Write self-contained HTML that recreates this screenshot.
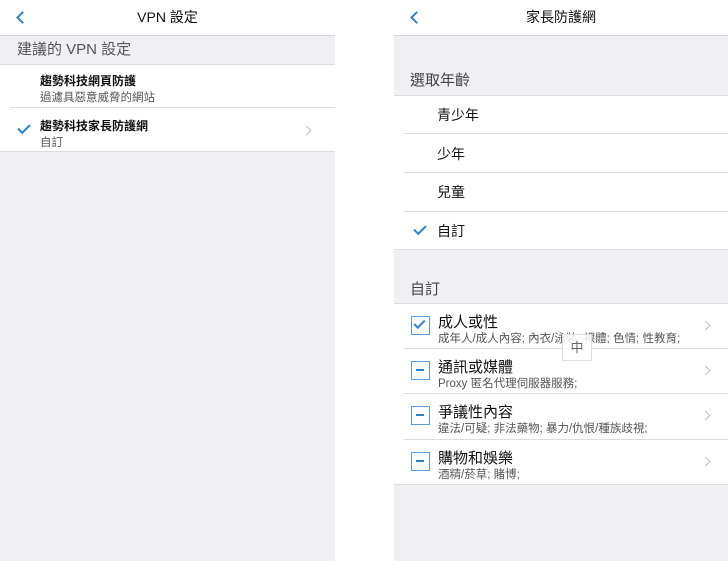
<!DOCTYPE html><html><head><meta charset="utf-8"><style>
*{margin:0;padding:0;box-sizing:border-box}
body{width:728px;height:561px;background:#fff;font-family:"Liberation Sans","Noto Sans CJK TC",sans-serif;position:relative;overflow:hidden}
.p{position:absolute;top:0;height:561px;background:#efeff4}
.hd{position:absolute;left:0;right:0;top:0;height:36px;background:#fff;border-bottom:1px solid #d8d8dc;text-align:center;font-size:14px;line-height:35px;color:#111}
.bk{position:absolute;left:18px;top:13px;width:9px;height:9px;border-left:2.5px solid #2f7fd0;border-bottom:2.5px solid #2f7fd0;transform:rotate(45deg)}
.abs{position:absolute}
.row{position:absolute;left:0;right:0;background:#fff}
.ln{position:absolute;height:1px;background:#dcdce0}
.chev{position:absolute;width:7px;height:7px;border-right:1.3px solid #bbb;border-top:1.3px solid #bbb;transform:rotate(45deg)}
.ck{position:absolute;width:12px;height:7px;border-left:2.2px solid #2f7fd0;border-bottom:2.2px solid #2f7fd0;transform:rotate(-45deg)}
.box{position:absolute;left:17px;width:19px;height:19px;border:1.5px solid #5a9ad8;background:#fff}
.box.m::after{content:"";position:absolute;left:4px;top:7px;width:8px;height:2px;background:#2f7fd0}
.t{position:absolute;left:44px;font-size:15px;color:#111}
.s{position:absolute;left:44px;font-size:11.5px;color:#555}
</style></head><body>
<div class="p" style="left:0;width:335px">
 <div class="hd"><div class="bk"></div>VPN 設定</div>
 <div class="abs" style="left:17px;top:38px;font-size:15px;color:#555">建議的 VPN 設定</div>
 <div class="row" style="top:64px;height:88px;border-top:1px solid #dcdce0;border-bottom:1px solid #dcdce0"></div>
 <div class="abs" style="left:40px;top:72px;font-size:12px;font-weight:bold;color:#111">趨勢科技網頁防護</div>
 <div class="abs" style="left:40px;top:89px;font-size:11.5px;color:#555">過濾具惡意威脅的網站</div>
 <div class="ln" style="left:10px;right:0;top:107px"></div>
 <div class="abs" style="left:40px;top:117px;font-size:12px;font-weight:bold;color:#111">趨勢科技家長防護網</div>
 <div class="abs" style="left:40px;top:134px;font-size:11.5px;color:#555">自訂</div>
 <div class="ck" style="left:18px;top:124px"></div>
 <div class="chev" style="left:303px;top:127px"></div>
</div>
<div class="p" style="left:394px;width:334px">
 <div class="hd"><div class="bk"></div>家長防護網</div>
 <div class="abs" style="left:16px;top:69px;font-size:15px;color:#444">選取年齡</div>
 <div class="row" style="top:95px;height:155px;border-top:1px solid #dcdce0;border-bottom:1px solid #dcdce0"></div>
 <div class="ln" style="left:10px;right:0;top:133px"></div>
 <div class="ln" style="left:10px;right:0;top:172px"></div>
 <div class="ln" style="left:10px;right:0;top:211px"></div>
 <div class="abs" style="left:43px;top:105px;font-size:14px;color:#111">青少年</div>
 <div class="abs" style="left:43px;top:144px;font-size:14px;color:#111">少年</div>
 <div class="abs" style="left:43px;top:182px;font-size:14px;color:#111">兒童</div>
 <div class="abs" style="left:43px;top:221px;font-size:14px;color:#111">自訂</div>
 <div class="ck" style="left:20px;top:225px"></div>
 <div class="abs" style="left:16px;top:278px;font-size:15px;color:#444">自訂</div>
 <div class="row" style="top:303px;height:182px;border-top:1px solid #dcdce0;border-bottom:1px solid #dcdce0"></div>
 <div class="ln" style="left:10px;right:0;top:348px"></div>
 <div class="ln" style="left:10px;right:0;top:393px"></div>
 <div class="ln" style="left:10px;right:0;top:439px"></div>
 <div class="box" style="top:316px"><div class="ck" style="left:2px;top:3px;width:11px;height:6px"></div></div>
 <div class="box m" style="top:361px"></div>
 <div class="box m" style="top:406px"></div>
 <div class="box m" style="top:452px"></div>
 <div class="t" style="top:311px">成人或性</div><div class="s" style="top:330px">成年人/成人內容; 內衣/泳裝; 裸體; 色情; 性教育;</div>
 <div class="t" style="top:356px">通訊或媒體</div><div class="s" style="top:375px">Proxy 匿名代理伺服器服務;</div>
 <div class="t" style="top:401px">爭議性內容</div><div class="s" style="top:420px">違法/可疑; 非法藥物; 暴力/仇恨/種族歧視;</div>
 <div class="t" style="top:447px">購物和娛樂</div><div class="s" style="top:466px">酒精/菸草; 賭博;</div>
 <div class="chev" style="left:308px;top:322px"></div>
 <div class="chev" style="left:308px;top:367px"></div>
 <div class="chev" style="left:308px;top:412px"></div>
 <div class="chev" style="left:308px;top:458px"></div>
 <div class="abs" style="left:168px;top:334px;width:30px;height:27px;border:1px solid #ddd;background:rgba(255,255,255,.85);font-size:13px;color:#666;text-align:center;line-height:25px">中</div>
</div>
</body></html>
